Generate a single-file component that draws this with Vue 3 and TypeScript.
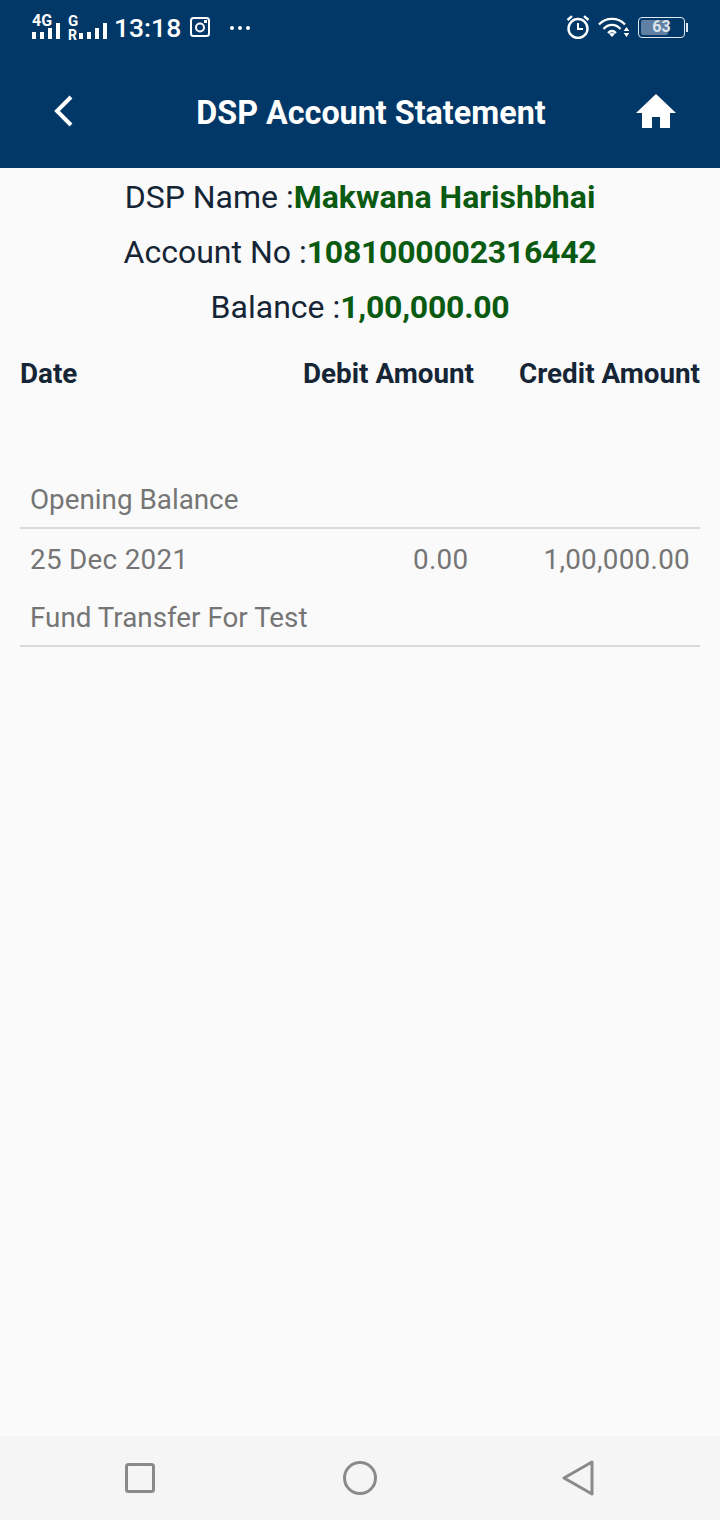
<script setup lang="ts">
interface SummaryLine {
  label: string
  value: string
  numeric?: boolean
}

const summary: SummaryLine[] = [
  { label: 'DSP Name :', value: 'Makwana Harishbhai' },
  { label: 'Account No :', value: '1081000002316442', numeric: true },
  { label: 'Balance :', value: '1,00,000.00', numeric: true },
]
</script>

<template>
  <div class="screen">
    <header class="appbar">
      <div class="status">
        <div class="status__left">
          <div class="sim">
            <span class="sim__label sim__label--4g">4G</span>
            <svg class="sim__bars" width="28" height="16" viewBox="0 0 28 16" fill="#fff">
              <rect x="0" y="9" width="4" height="7" />
              <rect x="8" y="9" width="4" height="7" />
              <rect x="16" y="5" width="4" height="11" />
              <rect x="24" y="0" width="4" height="16" />
            </svg>
          </div>
          <div class="sim sim--second">
            <span class="sim__label sim__label--g">G</span>
            <span class="sim__label sim__label--r">R</span>
            <svg class="sim__bars sim__bars--short" width="28" height="16" viewBox="0 0 28 16" fill="#fff">
              <rect x="0" y="10" width="4" height="6" />
              <rect x="8" y="9" width="4" height="7" />
              <rect x="16" y="5" width="4" height="11" />
              <rect x="24" y="0" width="4" height="16" />
            </svg>
          </div>
          <span class="status__time">13:18</span>
          <svg class="insta" width="20" height="20" viewBox="0 0 20 20">
            <rect x="1" y="1" width="18" height="18" rx="2.5" fill="none" stroke="#fff" stroke-width="2" />
            <circle cx="10" cy="10.5" r="4" fill="none" stroke="#fff" stroke-width="2" />
            <rect x="14" y="3" width="3" height="3" fill="#fff" />
          </svg>
          <svg class="dots" width="22" height="6" viewBox="0 0 22 6" fill="#fff">
            <circle cx="3" cy="3" r="2" />
            <circle cx="11" cy="3" r="2" />
            <circle cx="19" cy="3" r="2" />
          </svg>
        </div>
        <div class="status__right">
          <svg width="24" height="24" viewBox="0 0 24 24" fill="none" stroke="#fff">
            <circle cx="12" cy="13.5" r="9.5" stroke-width="2.4" />
            <path d="M12 8v6h5" stroke-width="2" />
            <path d="M1.5 5 6 1.2M22.5 5 18 1.2" stroke-width="2.4" />
          </svg>
          <svg width="32" height="22" viewBox="0 0 32 22" fill="none" stroke="#fff" stroke-width="2.2">
            <path d="M1 8.5C8 1 20 1 27 8.5" />
            <path d="M5.5 13C10.5 7.5 17.5 7.5 22.5 13" />
            <path d="M10 17C12.5 14.5 15.5 14.5 18 17" />
            <path d="M14 21l-3-3.2c1.8-1.2 4.2-1.2 6 0z" fill="#fff" stroke="none" />
            <path d="M28.5 11l2.8 4h-5.6zM28.5 21l2.8-4h-5.6z" fill="#fff" stroke="none" />
          </svg>
          <div class="battery">
            <div class="battery__body">
              <span class="battery__fill"></span>
              <span class="battery__text">63</span>
            </div>
            <span class="battery__cap"></span>
          </div>
        </div>
      </div>
      <div class="toolbar">
        <svg width="24" height="32" viewBox="0 0 24 32" fill="none" stroke="#fff" stroke-width="4">
          <path d="M19 2 5 16l14 14" />
        </svg>
        <h1 class="toolbar__title">DSP Account Statement</h1>
        <svg width="40" height="34" viewBox="0 0 40 34" fill="#fff">
          <path d="M20 0 40 19h-6v15H24V23h-8v11H6V19H0z" />
        </svg>
      </div>
    </header>

    <main class="content">
      <section class="summary">
        <p v-for="line in summary" :key="line.label" class="summary__line">
          {{ line.label }}<strong class="summary__value" :class="{ 'summary__value--num': line.numeric }">{{ line.value }}</strong>
        </p>
      </section>

      <div class="heads">
        <span class="heads__date">Date</span>
        <span class="heads__debit">Debit Amount</span>
        <span class="heads__credit">Credit Amount</span>
      </div>

      <div class="entry entry--opening">
        <div class="entry__text">Opening Balance</div>
      </div>
      <div class="entry entry--transfer">
        <div class="entry__row">
          <span class="entry__date">25 Dec 2021</span>
          <span class="entry__debit">0.00</span>
          <span class="entry__credit">1,00,000.00</span>
        </div>
        <div class="entry__text">Fund Transfer For Test</div>
      </div>
    </main>

    <footer class="navbar">
      <svg width="30" height="30" viewBox="0 0 30 30" fill="none" stroke="#8a8a8a" stroke-width="3">
        <rect x="1.5" y="1.5" width="27" height="27" rx="2" />
      </svg>
      <svg class="navbar__home" width="34" height="34" viewBox="0 0 34 34" fill="none" stroke="#8a8a8a" stroke-width="3">
        <circle cx="17" cy="17" r="15.5" />
      </svg>
      <svg class="navbar__back" width="32" height="36" viewBox="0 0 32 36" fill="none" stroke="#8a8a8a" stroke-width="3" stroke-linejoin="round">
        <path d="M30 2 2 18 30 34z" />
      </svg>
    </footer>
  </div>
</template>

<style scoped>
.screen {
  width: 720px;
  height: 1520px;
  display: flex;
  flex-direction: column;
  background: #fafafa;
  font-family: Roboto, "Liberation Sans", sans-serif;
  overflow: hidden;
}

.appbar {
  height: 168px;
  flex-shrink: 0;
  background: #023868;
  color: #fff;
}

.status {
  height: 54px;
  padding: 0 32px;
  display: flex;
  align-items: center;
  justify-content: space-between;
}

.status__left,
.status__right {
  display: flex;
  align-items: center;
}

.sim {
  width: 28px;
  height: 24px;
  position: relative;
}

.sim--second {
  width: 39px;
  margin-left: 8px;
}

.sim__label {
  position: absolute;
  left: 0;
  font-weight: 700;
  font-size: 15px;
  line-height: 12px;
}

.sim__label--4g {
  top: 0;
  font-size: 16px;
}

.sim__label--g {
  top: 0;
}

.sim__label--r {
  top: 14px;
  font-size: 14px;
}

.sim__bars {
  position: absolute;
  left: 0;
  bottom: 0;
}

.sim__bars--short {
  left: 11px;
}

.status__time {
  margin-left: 7px;
  font-size: 26.5px;
  font-weight: 500;
}

.insta {
  margin-left: 9px;
}

.dots {
  margin: 2px 0 0 19px;
}

.status__right {
  gap: 8px;
}

.battery {
  display: flex;
  align-items: center;
}

.battery__body {
  width: 45px;
  height: 19px;
  border: 1.5px solid #dfe8f0;
  border-radius: 4px;
  position: relative;
  overflow: hidden;
}

.battery__fill {
  position: absolute;
  left: 2px;
  top: 2px;
  bottom: 2px;
  width: 27px;
  background: #5f7fa3;
  border-radius: 2px;
}

.battery__text {
  position: relative;
  display: block;
  text-align: center;
  font-size: 16px;
  line-height: 17px;
  font-weight: 700;
  color: #dbe4ec;
}

.battery__cap {
  width: 2px;
  height: 9px;
  margin-left: 1px;
  background: #dfe8f0;
}

.toolbar {
  height: 114px;
  padding: 0 44px 0 52px;
  display: flex;
  align-items: center;
  justify-content: space-between;
}

.toolbar__title {
  margin: 4px 0 0 30px;
  font-size: 32.3px;
  font-weight: 700;
  color: #fff;
}

.content {
  flex: 1;
  padding: 0 20px;
}

.summary {
  padding-top: 2px;
}

.summary__line {
  margin: 0;
  height: 55px;
  line-height: 55px;
  text-align: center;
  font-size: 32px;
  color: #152536;
}

.summary__value {
  font-weight: 700;
  color: #0b5a12;
}

.summary__value--num {
  letter-spacing: -0.25px;
}

.heads {
  margin-top: 21px;
  display: flex;
  font-size: 27.8px;
  font-weight: 700;
  color: #152536;
  line-height: 36px;
}

.heads__date {
  flex: 1;
}

.heads__credit {
  margin-left: 45px;
}

.entry {
  color: #757575;
  font-size: 27.8px;
  line-height: 32px;
  padding: 0 10px;
  border-bottom: 2px solid #d9d9d9;
}

.entry--opening {
  margin-top: 92px;
  height: 43px;
}

.entry--transfer {
  padding-top: 15px;
  height: 118px;
  box-sizing: border-box;
}

.entry__row {
  display: flex;
  margin-bottom: 26px;
  letter-spacing: 0.3px;
}

.entry__date {
  flex: 1;
}

.entry__credit {
  margin-left: 75px;
}

.navbar {
  height: 84px;
  flex-shrink: 0;
  background: #f5f5f5;
  display: flex;
  align-items: center;
  padding-left: 125px;
}

.navbar__home {
  margin-left: 188px;
}

.navbar__back {
  margin-left: 185px;
}
</style>

<style>
body {
  background: #fafafa;
}
</style>
